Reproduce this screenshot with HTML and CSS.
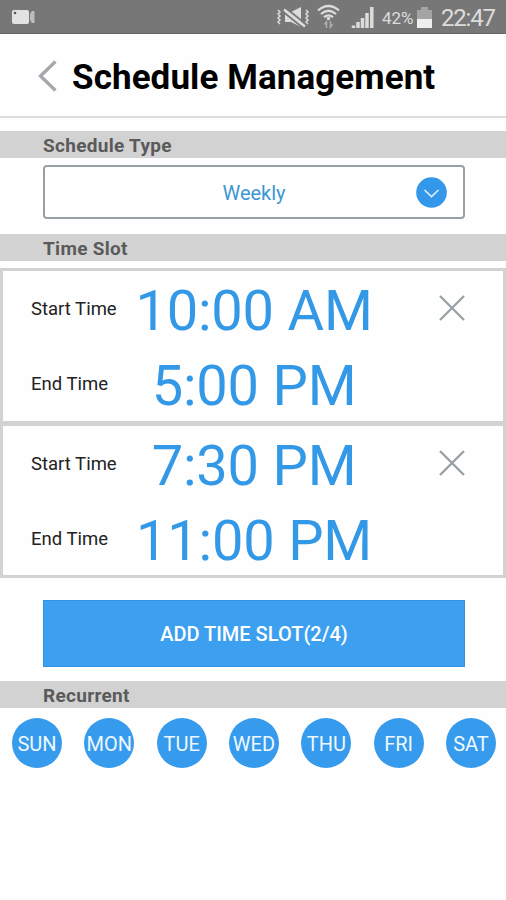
FILE: index.html
```html
<!DOCTYPE html>
<html lang="en">
<head>
<meta charset="utf-8">
<title>Schedule Management</title>
<link rel="stylesheet" href="styles.css">
</head>
<body>
<div class="status">
  <svg class="cam" width="24" height="16" viewBox="0 0 24 16"><rect x="1" y="1" width="17" height="14" rx="2" fill="#e2e2e2"/><path d="M19 5l2-3h2.500v12H21l-2-3z" fill="#bdbdbd"/><circle cx="4" cy="4" r="1.300" fill="#555"/></svg>
  <svg class="tray" width="157" height="34" viewBox="276 0 157 34" fill="none" stroke="#dcdcdc">
    <path d="M278 10l2 2-2 2 2 2-2 2 2 2-2 2 2 2M306 10l2 2-2 2 2 2-2 2 2 2-2 2 2 2" stroke-width="1.500"/>
    <path d="M285 12h6l10-5v20l-10-5h-6z" fill="#dcdcdc" stroke="none"/>
    <path d="M284 12.500l20 16" stroke="#777" stroke-width="2"/>
    <path d="M285 7.500l20 16" stroke="#777" stroke-width="2"/>
    <path d="M284 9.500l21 17" stroke-width="2.500"/>
    <path d="M318 10.500Q328.500 1.500 339 10.500M321 14Q328.500 7.500 336 14M324 17.200Q328.500 13.500 333 17.200" stroke-width="2.300"/>
    <circle cx="328.500" cy="18.500" r="1.700" fill="#dcdcdc" stroke="none"/>
    <path d="M326.500 28v-6l-2 2.500M330.500 21v6l2-2.500" stroke="#b0b0b0" stroke-width="1.500"/>
    <path d="M353.500 28v-2.500M358 28v-6M362.500 28V18M367 28V13M371.800 28V7" stroke-width="3.500"/>
    <path d="M417 10h4V7h7v3h4v9h-15z" fill="#a4a4a4" stroke="none"/><path d="M417 19h15v9h-15z" fill="#efefef" stroke="none"/>
    <text class="pct" x="382" y="24">42%</text>
  </svg>
  <span class="clock">22:47</span>
</div>
<header class="header">
  <svg class="back" width="20" height="34" viewBox="0 0 20 34"><path d="M17.500 2.500L2.500 17l15 14.500" fill="none" stroke="#a4a8ac" stroke-width="3.300"/></svg>
  <h1 class="title">Schedule Management</h1>
</header>
<h2 class="section section-type">Schedule Type</h2>
<div class="select"><span class="value">Weekly</span>
  <svg class="arrow" width="31" height="31" viewBox="0 0 31 31"><circle cx="15.500" cy="15.500" r="15.300" fill="#3498ea"/><path d="M8.500 13l7 6.500 7-6.500" fill="none" stroke="#d9efff" stroke-width="1.700"/></svg>
</div>
<h2 class="section section-slot">Time Slot</h2>
<div class="slots">
  <div class="slot">
    <div class="row"><span class="label">Start Time</span><span class="time">10:00 AM</span>
      <svg class="close" width="26" height="26" viewBox="0 0 26 26"><path d="M1 1l24 24M25 1L1 25" stroke="#98a0a4" stroke-width="2.300"/></svg></div>
    <div class="row"><span class="label">End Time</span><span class="time">5:00 PM</span></div>
  </div>
  <div class="slot">
    <div class="row"><span class="label">Start Time</span><span class="time">7:30 PM</span>
      <svg class="close" width="26" height="26" viewBox="0 0 26 26"><path d="M1 1l24 24M25 1L1 25" stroke="#98a0a4" stroke-width="2.300"/></svg></div>
    <div class="row"><span class="label">End Time</span><span class="time">11:00 PM</span></div>
  </div>
</div>
<button class="add"><span>ADD TIME SLOT(2/4)</span></button>
<h2 class="section section-rec">Recurrent</h2>
<div class="days"><span class="day">SUN</span><span class="day">MON</span><span class="day">TUE</span><span class="day">WED</span><span class="day">THU</span><span class="day">FRI</span><span class="day">SAT</span></div>
</body>
</html>
```
FILE: styles.css
```css
* { box-sizing: border-box; }
body { margin: 0; width: 506px; height: 900px; overflow: hidden; background: #fefefe; font-family: Roboto, "Liberation Sans", sans-serif; }
svg { display: block; flex: none; }
.status { height: 34px; background: #777; border-bottom: 1px solid #666; display: flex; align-items: center; padding-left: 11px; }
.tray { margin-left: 241px; }
.pct { font-size: 17px; fill: #dcdcdc; stroke: none; }
.clock { margin-left: 8px; font-size: 24px; letter-spacing: -1.200px; line-height: 34px; color: #dcdcdc; padding-top: 2px; white-space: nowrap; }
.header { height: 84px; border-bottom: 2px solid #dcdcdc; display: flex; align-items: center; padding: 2px 0 0 38px; }
.title { margin: 4px 0 0 14px; font-size: 35px; font-weight: 700; color: #000; white-space: nowrap; line-height: 40px; letter-spacing: 0.080px; }
.section { margin: 0; height: 27px; background: #d2d2d2; padding-left: 43px; font-size: 19px; font-weight: 700; letter-spacing: 0.300px; line-height: 29px; color: #5a5a5a; }
.section-type { margin-top: 13px; }
.select { margin: 7px 41px 0 43px; height: 54px; border: 2px solid #98a2a5; border-radius: 4px; display: grid; grid-template-columns: 1fr 31px; align-items: center; padding-right: 16px; background: #fff; }
.value { text-align: center; padding-left: 47px; font-size: 20px; color: #3c97d3; padding-top: 2px; }
.section-slot { margin-top: 15px; }
.slots { margin-top: 7px; border: 3px solid #d2d2d2; }
.slot { height: 150px; }
.slot + .slot { height: 154px; border-top: 5px solid #d2d2d2; }
.row { height: 75px; display: grid; grid-template-columns: 103px 240px 1fr; grid-template-rows: 75px; align-items: center; padding-left: 28px; }
.label { font-size: 18.500px; color: #222; white-space: nowrap; padding-top: 2px; }
.time { font-size: 56px; line-height: 75px; letter-spacing: -0.200px; color: #3399e6; text-align: center; white-space: nowrap; padding-top: 6px; }
.label, .close { margin-bottom: 1px; }
.close { margin-left: 64.500px; }
.add { display: block; width: 422px; height: 67px; margin: 22px 0 0 43px; border: 1px solid #3393de; background: #3c9ff0; color: #fff; font: 500 20px Roboto, "Liberation Sans", sans-serif; padding: 1px 0 0; }
.section-rec { margin-top: 14px; }
.days { display: flex; justify-content: space-between; padding: 10px 10px 0 12px; }
.day { width: 50px; height: 50px; border-radius: 50%; background: #379bed; color: #eef8ff; font-size: 20px; line-height: 52px; text-align: center; }
```
